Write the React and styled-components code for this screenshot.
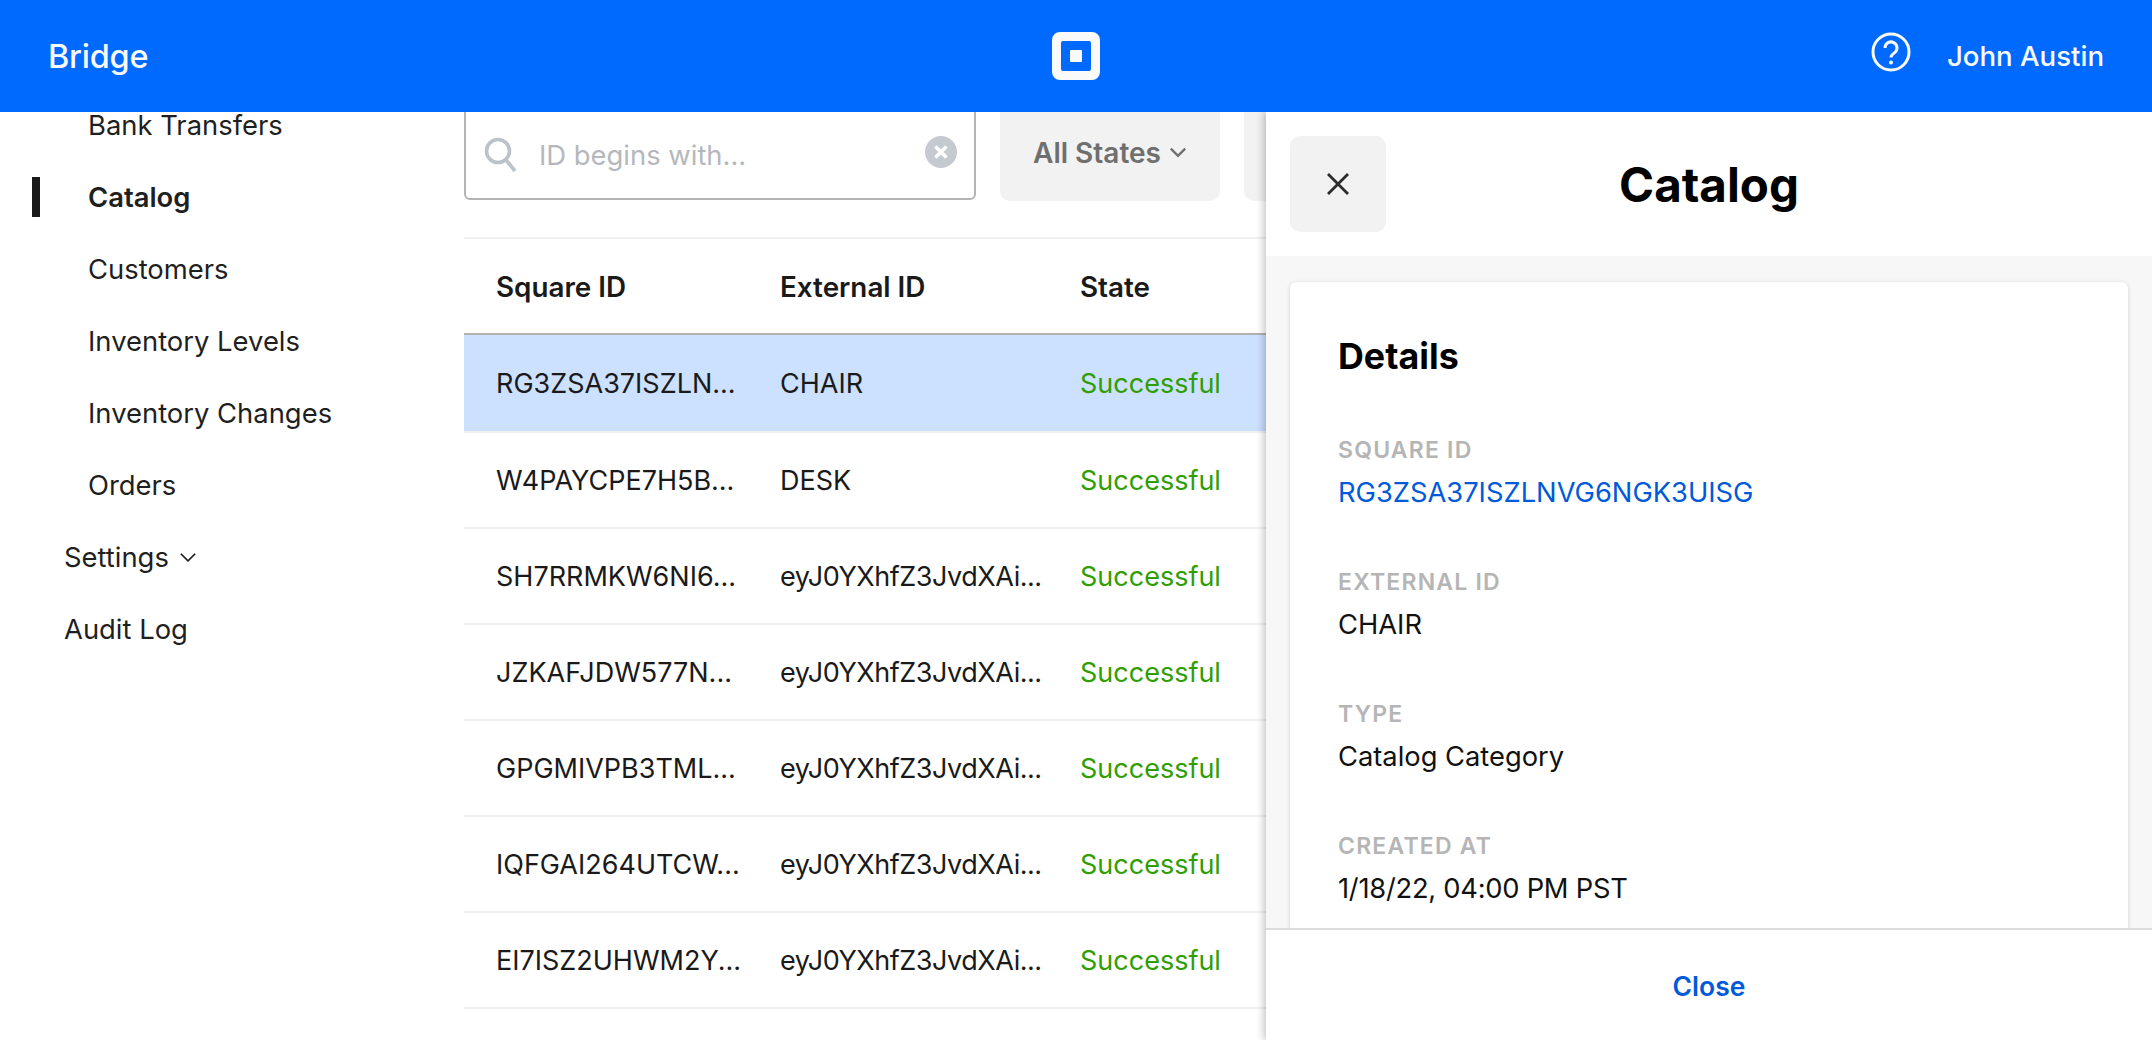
import React from "react";
import styled, { createGlobalStyle } from "styled-components";

const GlobalStyle = createGlobalStyle`
  html, body {
    margin: 0;
    padding: 0;
    height: 100%;
    background: #fff;
    overflow: hidden;
    font-family: "Inter", "Liberation Sans", sans-serif;
    color: #1a1a1a;
  }
`;

const Page = styled.div`
  position: relative;
  width: 2152px;
  height: 1040px;
  overflow: hidden;
  display: flex;
  flex-direction: column;
`;

const TopBar = styled.header`
  position: relative;
  z-index: 3;
  flex: none;
  height: 112px;
  padding: 0 48px;
  background: #006aff;
  color: #f8f9fb;
  display: grid;
  grid-template-columns: 1fr auto 1fr;
  align-items: center;
`;

const Brand = styled.div`
  font-size: 32.4px;
  font-weight: 500;
  letter-spacing: -0.2px;
`;

const TopRight = styled.div`
  display: flex;
  justify-content: flex-end;
  align-items: center;
  gap: 36px;
`;

const UserName = styled.div`
  font-size: 27.6px;
  font-weight: 500;
`;

const Body = styled.div`
  flex: 1;
  display: flex;
  min-height: 0;
`;

const Sidebar = styled.nav`
  flex: none;
  width: 464px;
  display: flex;
  flex-direction: column;
`;

const NavItem = styled.div`
  position: relative;
  height: 72px;
  display: flex;
  align-items: center;
  gap: 10px;
  padding-left: ${(props) => (props.$nested ? "88px" : "64px")};
  font-size: 27.4px;
  font-weight: ${(props) => (props.$active ? 600 : 400)};
  color: #1f1f1f;
  white-space: nowrap;

  &:first-child {
    height: 30px;
    align-items: flex-end;
    margin-bottom: 19px;
  }
`;

const ActiveMark = styled.span`
  position: absolute;
  left: 32px;
  top: 16px;
  width: 8px;
  height: 40px;
  background: #1a1a1a;
`;

const Main = styled.main`
  flex: 1;
  min-width: 0;
  display: flex;
  flex-direction: column;
`;

const Toolbar = styled.div`
  flex: none;
  height: 133px;
  margin-top: -8px;
  display: flex;
  align-items: flex-start;
  gap: 24px;
  border-bottom: 2px solid #f0f0f0;
`;

const SearchBox = styled.div`
  box-sizing: border-box;
  width: 512px;
  height: 96px;
  padding: 6px 17px 0 18px;
  display: flex;
  align-items: center;
  gap: 21px;
  background: #fff;
  border: 2px solid #b3b3b3;
  border-radius: 6px;
`;

const SearchPlaceholder = styled.div`
  flex: 1;
  font-size: 27.4px;
  color: #b4b8bd;
`;

const FilterButton = styled.div`
  flex: none;
  box-sizing: border-box;
  width: ${(props) => props.$width};
  height: 97px;
  display: flex;
  align-items: center;
  justify-content: center;
  gap: 8px;
  background: #f2f2f2;
  border-radius: 10px;
  color: #6f6f6f;
  font-size: 28px;
  font-weight: 600;
`;

const TableHead = styled.div`
  flex: none;
  box-sizing: border-box;
  height: 96px;
  padding-top: 2px;
  display: flex;
  align-items: center;
  border-bottom: 2px solid #b3b3b3;
  font-size: 27.8px;
  font-weight: 600;
  color: #1a1a1a;
`;

const Row = styled.div`
  flex: none;
  height: ${(props) => (props.$selected ? "96px" : "94px")};
  display: flex;
  align-items: center;
  border-bottom: 2px solid #f0f0f0;
  background: ${(props) => (props.$selected ? "#cce0ff" : "transparent")};
  font-size: 27px;
  color: #1a1a1a;
`;

const Cell = styled.div`
  flex: none;
  box-sizing: border-box;
  width: ${(props) => props.$width};
  padding-left: ${(props) => (props.$first ? "32px" : "0")};
  letter-spacing: ${(props) => (props.$tight ? "-0.45px" : "0")};
  white-space: nowrap;
`;

const Status = styled(Cell)`
  color: #2f9e00;
`;

const Panel = styled.aside`
  position: absolute;
  z-index: 2;
  top: 112px;
  right: 0;
  bottom: 0;
  width: 886px;
  display: flex;
  flex-direction: column;
  background: #f7f7f7;
  box-shadow: -2px 0 8px rgba(0, 0, 0, 0.25);
`;

const PanelHead = styled.div`
  flex: none;
  height: 144px;
  display: grid;
  grid-template-columns: 1fr auto 1fr;
  align-items: center;
  padding: 0 24px;
  background: #fff;
`;

const CloseSquare = styled.div`
  width: 96px;
  height: 96px;
  display: flex;
  align-items: center;
  justify-content: center;
  background: #f2f2f2;
  border-radius: 10px;
  color: #2b2b2b;
`;

const PanelTitle = styled.div`
  font-size: 47.5px;
  font-weight: 700;
  color: #000;
`;

const PanelBody = styled.div`
  flex: 1;
  min-height: 0;
  overflow: hidden;
  padding: 26px 24px 0;
`;

const Card = styled.section`
  box-sizing: border-box;
  height: 700px;
  padding: 52px 48px;
  background: #fff;
  border-radius: 6px;
  box-shadow: 0 1px 4px rgba(0, 0, 0, 0.16);
`;

const CardTitle = styled.h2`
  margin: 1px 0 59px;
  height: 42px;
  line-height: 42px;
  font-size: 35.8px;
  font-weight: 700;
  color: #000;
`;

const Field = styled.div`
  height: 132px;
`;

const FieldLabel = styled.div`
  height: 28px;
  line-height: 28px;
  font-size: 23px;
  font-weight: 600;
  letter-spacing: 1.2px;
  color: #b5b5b5;
  margin-bottom: 15px;
`;

const FieldValue = styled.div`
  height: 28px;
  line-height: 28px;
  font-size: 27.3px;
  letter-spacing: ${(props) => (props.$tight ? "-0.25px" : "0")};
  color: ${(props) => (props.$link ? "#005ad9" : "#111")};
`;

const PanelFoot = styled.div`
  flex: none;
  box-sizing: border-box;
  height: 112px;
  padding-top: 2px;
  display: flex;
  align-items: center;
  justify-content: center;
  background: #fff;
  border-top: 2px solid #dcdcdc;
  color: #005ad9;
  font-size: 26.5px;
  font-weight: 600;
`;

const rows = [
  ["RG3ZSA37ISZLN...", "CHAIR"],
  ["W4PAYCPE7H5B...", "DESK"],
  ["SH7RRMKW6NI6...", "eyJ0YXhfZ3JvdXAi..."],
  ["JZKAFJDW577N...", "eyJ0YXhfZ3JvdXAi..."],
  ["GPGMIVPB3TML...", "eyJ0YXhfZ3JvdXAi..."],
  ["IQFGAI264UTCW...", "eyJ0YXhfZ3JvdXAi..."],
  ["EI7ISZ2UHWM2Y...", "eyJ0YXhfZ3JvdXAi..."],
];

const fields = [
  { label: "SQUARE ID", value: "RG3ZSA37ISZLNVG6NGK3UISG", link: true },
  { label: "EXTERNAL ID", value: "CHAIR" },
  { label: "TYPE", value: "Catalog Category" },
  { label: "CREATED AT", value: "1/18/22, 04:00 PM PST", tight: true },
];

function Chevron({ size = 14, width = 2.2 }) {
  return (
    <svg width={size} height={size * 0.7} viewBox="0 0 20 14" fill="none">
      <path d="M2 3l8 8 8-8" stroke="currentColor" strokeWidth={width} />
    </svg>
  );
}

function App() {
  return (
    <Page>
      <GlobalStyle />
      <TopBar>
        <Brand>Bridge</Brand>
        <svg width="48" height="48" viewBox="0 0 48 48">
          <path
            fillRule="evenodd"
            fill="#fafafa"
            d="M8 0h32a8 8 0 0 1 8 8v32a8 8 0 0 1-8 8H8a8 8 0 0 1-8-8V8a8 8 0 0 1 8-8zM11 9a2 2 0 0 0-2 2v26a2 2 0 0 0 2 2h26a2 2 0 0 0 2-2V11a2 2 0 0 0-2-2zM19 18h10a1 1 0 0 1 1 1v10a1 1 0 0 1-1 1H19a1 1 0 0 1-1-1V19a1 1 0 0 1 1-1z"
          />
        </svg>
        <TopRight>
          <svg width="40" height="40" viewBox="0 0 40 40" fill="none" stroke="#f8f9fb" style={{ marginTop: -8 }}>
            <circle cx="20" cy="20" r="18" strokeWidth="3" />
            <path d="M14 16a6 6 0 1 1 9.5 4.8c-2 1.4-3.5 2.4-3.5 4.7" strokeWidth="3" />
            <circle cx="20" cy="30.5" r="2" fill="#f8f9fb" stroke="none" />
          </svg>
          <UserName>John Austin</UserName>
        </TopRight>
      </TopBar>
      <Body>
        <Sidebar>
          <NavItem $nested>Bank Transfers</NavItem>
          <NavItem $nested $active>
            <ActiveMark />
            Catalog
          </NavItem>
          <NavItem $nested>Customers</NavItem>
          <NavItem $nested>Inventory Levels</NavItem>
          <NavItem $nested>Inventory Changes</NavItem>
          <NavItem $nested>Orders</NavItem>
          <NavItem>
            Settings <Chevron size={18} width={1.8} />
          </NavItem>
          <NavItem>Audit Log</NavItem>
        </Sidebar>
        <Main>
          <Toolbar>
            <SearchBox>
              <svg width="34" height="36" viewBox="0 0 34 36" fill="none" stroke="#bcc2c9" strokeWidth="3.6">
                <circle cx="14" cy="14" r="11.5" />
                <path d="M22 23l9 11" />
              </svg>
              <SearchPlaceholder>ID begins with...</SearchPlaceholder>
              <svg width="32" height="32" viewBox="0 0 32 32" style={{ marginTop: -6 }}>
                <circle cx="16" cy="16" r="16" fill="#c5cad0" />
                <path d="M10.5 10.5l11 11M21.5 10.5l-11 11" stroke="#fff" strokeWidth="3.6" />
              </svg>
            </SearchBox>
            <FilterButton $width="220px">
              All States <Chevron size={18} width={2.6} />
            </FilterButton>
            <FilterButton $width="220px" />
          </Toolbar>
          <TableHead>
            <Cell $first $width="316px">Square ID</Cell>
            <Cell $width="300px">External ID</Cell>
            <Cell $width="200px">State</Cell>
          </TableHead>
          {rows.map(([id, ext], i) => (
            <Row key={id} $selected={i === 0}>
              <Cell $first $width="316px">{id}</Cell>
              <Cell $width="300px" $tight={ext.length > 5}>{ext}</Cell>
              <Status $width="200px">Successful</Status>
            </Row>
          ))}
        </Main>
      </Body>
      <Panel>
        <PanelHead>
          <CloseSquare>
            <svg width="24" height="24" viewBox="0 0 24 24" fill="none" stroke="currentColor" strokeWidth="2.8">
              <path d="M2 2l20 20M22 2L2 22" />
            </svg>
          </CloseSquare>
          <PanelTitle>Catalog</PanelTitle>
        </PanelHead>
        <PanelBody>
          <Card>
            <CardTitle>Details</CardTitle>
            {fields.map((f) => (
              <Field key={f.label}>
                <FieldLabel>{f.label}</FieldLabel>
                <FieldValue $link={f.link} $tight={f.tight}>{f.value}</FieldValue>
              </Field>
            ))}
          </Card>
        </PanelBody>
        <PanelFoot>Close</PanelFoot>
      </Panel>
    </Page>
  );
}

export default App;
